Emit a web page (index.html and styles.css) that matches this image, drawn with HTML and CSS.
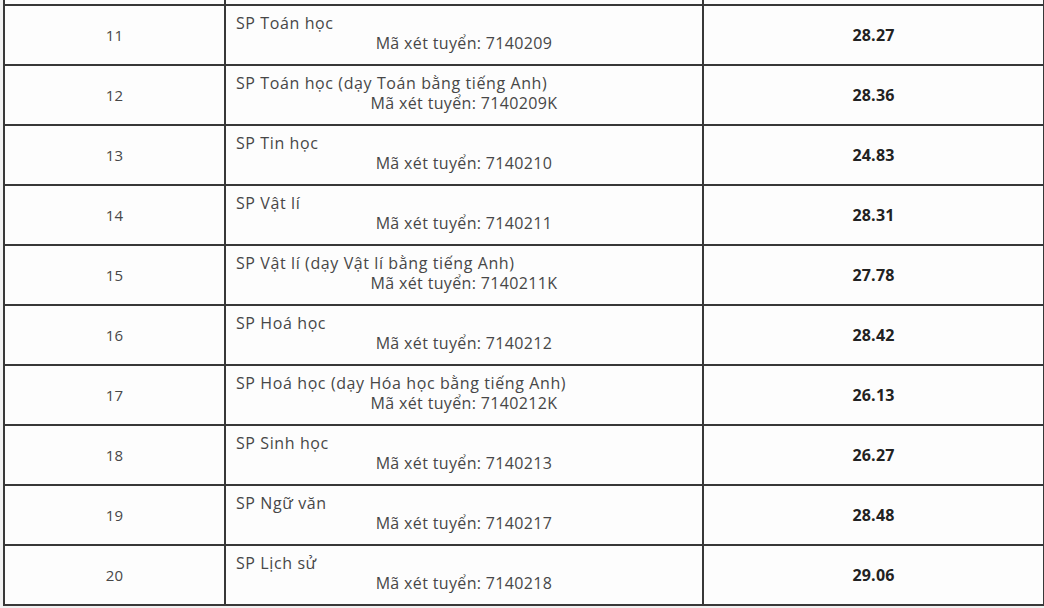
FILE: index.html
```html
<!DOCTYPE html>
<html lang="vi">
<head>
<meta charset="utf-8">
<title>Điểm chuẩn</title>
<link rel="stylesheet" href="styles.css">
</head>
<body>
<table class="scores">
  <colgroup>
    <col class="c-num">
    <col class="c-name">
    <col class="c-score">
  </colgroup>
  <tbody>
    <tr class="cut"><td></td><td></td><td></td></tr>
    <tr><td class="num">11</td><td class="name"><div class="title">SP Toán học</div><div class="code">Mã xét tuyển: 7140209</div></td><td class="score">28.27</td></tr>
    <tr><td class="num">12</td><td class="name"><div class="title">SP Toán học (dạy Toán bằng tiếng Anh)</div><div class="code">Mã xét tuyển: 7140209K</div></td><td class="score">28.36</td></tr>
    <tr><td class="num">13</td><td class="name"><div class="title">SP Tin học</div><div class="code">Mã xét tuyển: 7140210</div></td><td class="score">24.83</td></tr>
    <tr><td class="num">14</td><td class="name"><div class="title">SP Vật lí</div><div class="code">Mã xét tuyển: 7140211</div></td><td class="score">28.31</td></tr>
    <tr><td class="num">15</td><td class="name"><div class="title">SP Vật lí (dạy Vật lí bằng tiếng Anh)</div><div class="code">Mã xét tuyển: 7140211K</div></td><td class="score">27.78</td></tr>
    <tr><td class="num">16</td><td class="name"><div class="title">SP Hoá học</div><div class="code">Mã xét tuyển: 7140212</div></td><td class="score">28.42</td></tr>
    <tr><td class="num">17</td><td class="name"><div class="title">SP Hoá học (dạy Hóa học bằng tiếng Anh)</div><div class="code">Mã xét tuyển: 7140212K</div></td><td class="score">26.13</td></tr>
    <tr><td class="num">18</td><td class="name"><div class="title">SP Sinh học</div><div class="code">Mã xét tuyển: 7140213</div></td><td class="score">26.27</td></tr>
    <tr><td class="num">19</td><td class="name"><div class="title">SP Ngữ văn</div><div class="code">Mã xét tuyển: 7140217</div></td><td class="score">28.48</td></tr>
    <tr><td class="num">20</td><td class="name"><div class="title">SP Lịch sử</div><div class="code">Mã xét tuyển: 7140218</div></td><td class="score">29.06</td></tr>
  </tbody>
</table>
</body>
</html>
```

FILE: styles.css
```css
html, body {
  margin: 0;
  padding: 0;
  background: #f1f1f1;
}

body {
  font-family: "Open Sans", "Liberation Sans", sans-serif;
  color: #3c3c3c;
  padding-left: 3px;
}

.scores {
  border-collapse: collapse;
  table-layout: fixed;
  width: 1040px;
  background: #fdfdfd;
}

.c-num { width: 221px; }
.c-name { width: 478px; }
.c-score { width: 341px; }

.scores td {
  border: 2px solid #383838;
  padding: 0;
  height: 58px;
  vertical-align: middle;
}

.scores tr.cut td {
  height: 4px;
  border-top: none;
}

.num {
  text-align: center;
  font-size: 15px;
  letter-spacing: 0.2px;
  color: #474747;
}

.name {
  font-size: 16px;
  line-height: 20px;
  color: #474747;
}

.title {
  padding-left: 10px;
  margin-top: -4px;
  letter-spacing: 0.6px;
}

.code {
  text-align: center;
  letter-spacing: 0.35px;
}

.score {
  text-align: center;
  font-size: 16px;
  font-weight: 700;
  letter-spacing: 0.2px;
  color: #222;
}
```
